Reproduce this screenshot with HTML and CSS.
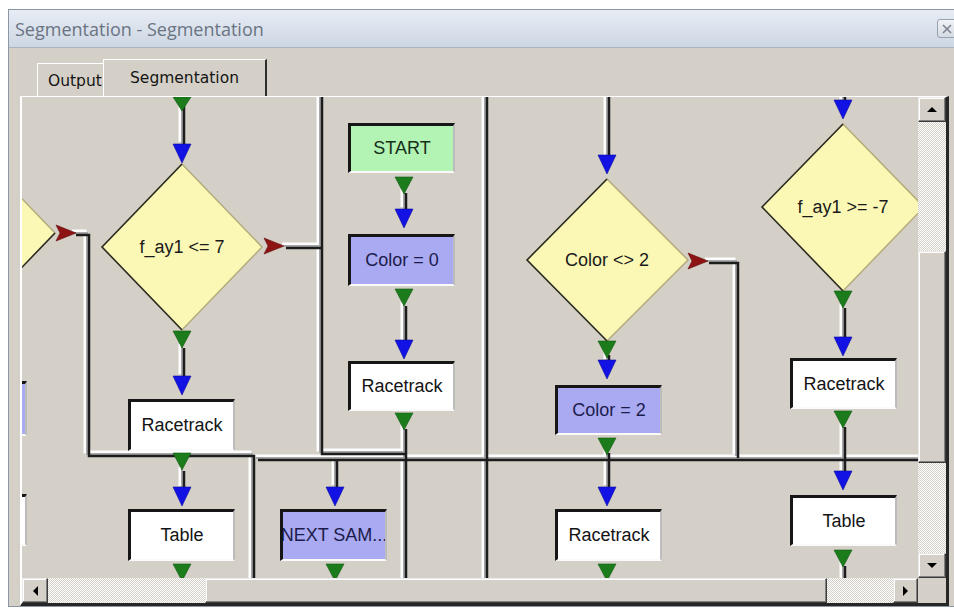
FILE: index.html
```html
<!DOCTYPE html>
<html lang="en">
<head>
    <meta charset="UTF-8">
    <title>Segmentation - Segmentation</title>
    <link rel="stylesheet" href="styles.css">
</head>
<body>
    <div class="window">
        <div class="titlebar">
            <span class="title">Segmentation - Segmentation</span>
            <span class="close">
                <svg width="12" height="12" viewBox="0 0 12 12"><path d="M2 2L10 10M10 2L2 10" stroke="#7a8490" stroke-width="1.6"/></svg>
            </span>
        </div>

        <div class="client">
            <div class="tabs">
                <div class="tab tab-output">Output</div>
                <div class="tab tab-active">Segmentation</div>
            </div>

            <div class="panel">
                <div class="canvas">
                    <svg class="flow" width="896" height="481" viewBox="22 96 896 481">
                        <defs>
                            <g id="wires">
                                <path d="M182 96V143"/>
                                <path d="M182 345V375"/>
                                <path d="M182 468V487"/>
                                <path d="M284 245H320"/>
                                <path d="M320 90V451H404"/>
                                <path d="M74 232H87V453H252V590"/>
                                <path d="M256 457H930"/>
                                <path d="M404 190V208"/>
                                <path d="M404 303V341"/>
                                <path d="M404 426V590"/>
                                <path d="M485 90V590"/>
                                <path d="M335 457V486"/>
                                <path d="M607 90V156"/>
                                <path d="M607 352V360"/>
                                <path d="M607 450V486"/>
                                <path d="M707 260H736V455"/>
                                <path d="M843 90V100"/>
                                <path d="M843 305V337"/>
                                <path d="M843 424V471"/>
                                <path d="M843 563V590"/>
                            </g>
                        </defs>

                        <!-- connectors: light edge, middle, dark edge -->
                        <use href="#wires" class="wire-hi" transform="translate(-2 -2)"/>
                        <use href="#wires" class="wire-mid"/>
                        <use href="#wires" class="wire-lo" transform="translate(2 2)"/>

                        <!-- decisions -->
                        <polygon class="dia" points="-25,149 55,232 -25,315 -105,232"/>
                        <polyline class="dia-edge" points="55,232 -25,315"/>

                        <polygon class="dia" points="182,163 262,246 182,329 102,246"/>
                        <polyline class="dia-edge" points="182,329 102,246 182,163"/>
                        <text class="dia-label" x="182" y="246">f_ay1 &lt;= 7</text>

                        <polygon class="dia" points="607,178 688,259 607,340 527,259"/>
                        <polyline class="dia-edge" points="607,340 527,259 607,178"/>
                        <text class="dia-label" x="607" y="259">Color &lt;&gt; 2</text>

                        <polygon class="dia" points="843,123 924,206 843,290 762,206"/>
                        <polyline class="dia-edge" points="843,290 762,206 843,123"/>
                        <text class="dia-label" x="843" y="206">f_ay1 &gt;= -7</text>

                        <!-- arrow heads -->
                        <path class="arr-out" d="M173 96h18l-9 14z M173 330h18l-9 17z M173 452h18l-9 17z M173 563h18l-9 17z
                            M395 176h18l-9 17z M395 288h18l-9 17z M395 412h18l-9 17z M326 563h18l-9 17z
                            M598 340h18l-9 17z M598 437h18l-9 17z M598 563h18l-9 17z
                            M834 290h18l-9 17z M834 410h18l-9 17z M834 549h18l-9 17z"/>
                        <path class="arr-in" d="M173 143h18l-9 19z M173 375h18l-9 19z M173 486h18l-9 19z
                            M395 208h18l-9 19z M395 339h18l-9 19z M326 486h18l-9 19z
                            M598 154h18l-9 19z M598 359h18l-9 19z M598 486h18l-9 19z
                            M834 99h18l-9 19z M834 336h18l-9 19z M834 470h18l-9 19z"/>
                        <path class="arr-no" d="M56 224l20 8l-20 8l4-8z M264 237l20 8l-20 8l4-8z M688 252l20 8l-20 8l4-8z"/>
                    </svg>

                    <div class="node assign n-left1"></div>
                    <div class="node n-left2"></div>

                    <div class="node n-rt1">Racetrack</div>
                    <div class="node n-tb1">Table</div>

                    <div class="node start n-start">START</div>
                    <div class="node assign n-c0">Color = 0</div>
                    <div class="node n-rt2">Racetrack</div>
                    <div class="node assign n-next">NEXT SAM...</div>

                    <div class="node assign n-c2">Color = 2</div>
                    <div class="node n-rt3">Racetrack</div>

                    <div class="node n-rt4">Racetrack</div>
                    <div class="node n-tb2">Table</div>
                </div>

                <div class="vscroll">
                    <div class="sbtn sbtn-v"><span class="tri tri-up"></span></div>
                    <div class="track track-v1"></div>
                    <div class="thumb thumb-v"></div>
                    <div class="track track-v2"></div>
                    <div class="sbtn sbtn-v"><span class="tri tri-down"></span></div>
                </div>

                <div class="hscroll">
                    <div class="sbtn sbtn-left"><span class="tri tri-left"></span></div>
                    <div class="track track-h1"></div>
                    <div class="thumb thumb-h"></div>
                    <div class="track track-h2"></div>
                    <div class="sbtn sbtn-right"><span class="tri tri-right"></span></div>
                </div>

                <div class="corner"></div>
            </div>
        </div>
    </div>
</body>
</html>
```

FILE: styles.css
```css
* {
    margin: 0;
    padding: 0;
    box-sizing: border-box;
}

body {
    background-color: #fff;
    font-family: "Liberation Sans", Arial, sans-serif;
    overflow: hidden;
}

.window {
    margin: 9px 0 0 8px;
    width: 946px;
    height: 598px;
    border: 1px solid #8c97a6;
    border-right: none;
    background-color: #d4d0c8;
    display: flex;
    flex-direction: column;
    overflow: hidden;
}

/* title bar */
.titlebar {
    flex: none;
    height: 38px;
    padding-left: 6px;
    background: linear-gradient(#e7edf5, #cdd6e3);
    border-bottom: 1px solid #a9b3c1;
    display: flex;
    align-items: center;
    justify-content: space-between;
}

.title {
    font-family: "Open Sans", sans-serif;
    font-size: 18px;
    color: #6a7482;
}

.close {
    width: 20px;
    height: 19px;
    margin-right: -3px;
    border: 1px solid #98a2b0;
    border-radius: 3px;
    background: linear-gradient(#f0f3f7, #d5dbe3);
    display: flex;
    align-items: center;
    justify-content: center;
}

/* tabs */
.client {
    flex: 1;
    padding-top: 11px;
    display: flex;
    flex-direction: column;
}

.tabs {
    flex: none;
    height: 37px;
    padding-left: 28px;
    display: flex;
    align-items: flex-end;
}

.tab {
    font-family: "DejaVu Sans", sans-serif;
    font-size: 15.5px;
    color: #151515;
    background-color: #d4d0c8;
    border-top: 1px solid #fff;
    border-left: 1px solid #fff;
}

.tab-output {
    width: 66px;
    height: 33px;
    padding: 8px 0 0 10px;
}

.tab-active {
    width: 164px;
    height: 37px;
    padding-top: 9px;
    text-align: center;
    border-right: 2px solid #2e2e2e;
}

/* panel with canvas and scroll bars */
.panel {
    flex: none;
    margin-left: 11px;
    width: 929px;
    height: 510px;
    border-top: 1px solid #fff;
    border-left: 2px solid #fff;
    border-right: 3px solid #262626;
    border-bottom: 3px solid #262626;
    display: grid;
    grid-template-columns: 896px 28px;
    grid-template-rows: 481px 25px;
}

.canvas {
    position: relative;
    overflow: hidden;
    background-color: #d4d0c8;
}

.flow {
    position: absolute;
    left: 0;
    top: 0;
}

.wire-hi, .wire-mid, .wire-lo {
    fill: none;
}

.wire-hi {
    stroke: #fdfdfd;
    stroke-width: 3;
}

.wire-mid {
    stroke: #a8a8a8;
    stroke-width: 2;
}

.wire-lo {
    stroke: #1c1c1c;
    stroke-width: 2.5;
}

.dia {
    fill: #fbf8b6;
    stroke: #b3ab7a;
    stroke-width: 1.5;
}

.dia-edge {
    fill: none;
    stroke: #2a2a24;
    stroke-width: 1.5;
}

.dia-label {
    font-family: "Liberation Sans", Arial, sans-serif;
    font-size: 18px;
    fill: #1a1a1a;
    text-anchor: middle;
    dominant-baseline: central;
}

.arr-out {
    fill: #1c7c1c;
    stroke: #135a13;
    stroke-width: 0.6;
}

.arr-in {
    fill: #1212e4;
    stroke: #0a0aa0;
    stroke-width: 0.6;
}

.arr-no {
    fill: #8e1414;
    stroke: #5e0a0a;
    stroke-width: 0.6;
}

/* flowchart blocks */
.node {
    position: absolute;
    width: 107px;
    height: 52px;
    border-style: solid;
    border-width: 3px 2px 2px 3px;
    border-color: #161616 #bcbcbc #fafafa #161616;
    background-color: #fff;
    display: flex;
    align-items: center;
    justify-content: center;
    font-size: 18px;
    color: #141414;
    white-space: nowrap;
    overflow: hidden;
}

.node.start {
    background-color: #b3f3b4;
    color: #16301a;
}

.node.assign {
    background-color: #a9aaf2;
    color: #1c1c4c;
}

.n-left1 { left: -102px; top: 284px; height: 55px; }
.n-left2 { left: -102px; top: 397px; }
.n-rt1 { left: 106px; top: 302px; }
.n-tb1 { left: 106px; top: 412px; }
.n-start { left: 326px; top: 26px; height: 50px; }
.n-c0 { left: 326px; top: 137px; }
.n-rt2 { left: 326px; top: 264px; height: 50px; }
.n-next { left: 258px; top: 412px; }
.n-c2 { left: 533px; top: 288px; height: 50px; }
.n-rt3 { left: 533px; top: 412px; }
.n-rt4 { left: 768px; top: 261px; height: 51px; }
.n-tb2 { left: 768px; top: 398px; height: 51px; }

/* scroll bars */
.vscroll {
    display: flex;
    flex-direction: column;
}

.hscroll {
    display: flex;
}

.sbtn, .thumb {
    flex: none;
    background-color: #d4d0c8;
    border: 1px solid;
    border-color: #e9e9e9 #3c3c3c #3c3c3c #e9e9e9;
    box-shadow: inset -1px -1px #808080, inset 1px 1px #fff;
    display: flex;
    align-items: center;
    justify-content: center;
}

.sbtn-v { height: 25px; }
.sbtn-left { width: 26px; }
.sbtn-right { width: 25px; }
.thumb-v { height: 212px; }
.thumb-h { width: 622px; }

.track {
    flex: none;
    background: repeating-conic-gradient(#d4d0c8 0 25%, #fff 0 50%) 0 0 / 2px 2px;
}

.track-v1 { height: 129px; }
.track-v2 { height: 90px; }
.track-h1 { width: 157px; }
.track-h2 { width: 66px; }

.tri {
    width: 0;
    height: 0;
    border: 5px solid transparent;
}

.tri-up { border-bottom-color: #000; border-top-width: 0; }
.tri-down { border-top-color: #000; border-bottom-width: 0; }
.tri-left { border-right-color: #000; border-left-width: 0; }
.tri-right { border-left-color: #000; border-right-width: 0; }

.corner {
    background-color: #d4d0c8;
}
```
